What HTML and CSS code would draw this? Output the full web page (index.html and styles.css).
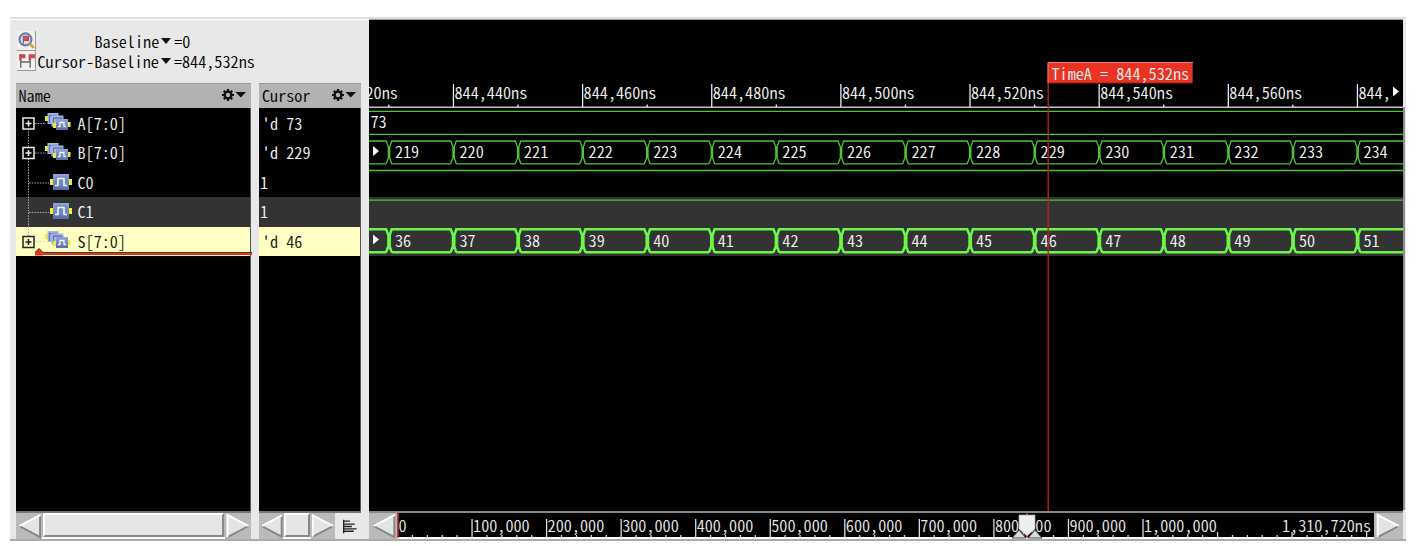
FILE: index.html
```
<!DOCTYPE html>
<html lang="en">
<head>
<meta charset="utf-8">
<title>Waveform</title>
<link rel="stylesheet" href="styles.css">
</head>
<body>
<svg class="defs" width="0" height="0" aria-hidden="true">
  <defs>
    <linearGradient id="blue" x1="0" y1="0" x2="0" y2="1"><stop offset="0" stop-color="#91a5d8"/><stop offset="1" stop-color="#566da8"/></linearGradient>
    <symbol id="gear" viewBox="0 0 24 14">
      <circle cx="7" cy="7" r="3.4" fill="none" stroke="#111" stroke-width="2.4"/>
      <path d="M7 1v2M7 11v2M1 7h2M11 7h2M2.8 2.8l1.4 1.4M9.8 9.8l1.4 1.4M11.2 2.8L9.8 4.200M4.200 9.800L2.800 11.200" stroke="#111" stroke-width="2.200"/>
      <path d="M14.500 4h10.500l-5.200 5.500z" fill="#111"/>
    </symbol>
    <symbol id="scalar" viewBox="0 0 26 20">
      <path d="M1 7h3v6H1zM20 7h3v6h-3z" fill="#f2ee2c"/>
      <rect x="4" y="2" width="16" height="16" fill="url(#blue)"/>
      <rect x="6.500" y="4.500" width="11" height="9" fill="#7489c0"/>
      <path d="M6 13.500h3v-7h6v7h3" fill="none" stroke="#f2f4ff" stroke-width="1.600"/>
    </symbol>
    <symbol id="bus" viewBox="0 0 26 20">
      <path d="M0 4h3v5H0zM3 7h3v5H3zM22.500 10h3v5h-3z" fill="#f2ee2c"/>
      <rect x="2.500" y="1" width="11" height="11" fill="#a9b9e2"/><path d="M4.500 11V3.500h8" fill="none" stroke="#5f77b4" stroke-width="1.400"/>
      <rect x="6.500" y="3.500" width="12" height="11" fill="#a9b9e2"/><path d="M8.500 13.500V6h9" fill="none" stroke="#5f77b4" stroke-width="1.400"/>
      <rect x="11" y="7" width="12" height="11" fill="url(#blue)"/>
      <path d="M13 14.500h2v-4h4v4h2" fill="none" stroke="#f2f4ff" stroke-width="1.300"/>
      <path d="M8 11h3v5H8z" fill="#f2ee2c"/>
    </symbol>
    <symbol id="left" viewBox="0 0 26 27">
      <path d="M24.500 2L3 13.500 24.500 25z" fill="#e4e4e4"/>
      <path d="M3 13.500L24.500 25V2" fill="none" stroke="#858585" stroke-width="2"/>
      <path d="M25 2L3 13.500" fill="none" stroke="#fff" stroke-width="2"/>
    </symbol>
    <symbol id="right" viewBox="0 0 26 27">
      <path d="M2 2L24 13.500 2 25z" fill="#e4e4e4"/>
      <path d="M24 13.500L2 25" fill="none" stroke="#858585" stroke-width="2"/>
      <path d="M2 25V2L24 13.500" fill="none" stroke="#fff" stroke-width="2"/>
    </symbol>
  </defs>
</svg>

<main class="window">
  <section class="side">
    <div class="info">
      <div class="info-line">
        <svg class="tool" viewBox="0 0 18 19"><rect width="18" height="19" fill="#f3f1ef"/><path d="M17.500 0v18.500H0" fill="none" stroke="#999"/><circle cx="8" cy="8" r="5.700" fill="#d7dfef" stroke="#6280ae" stroke-width="2"/><path d="M6 12V5h5v4H7" fill="#d05353" stroke="#bb4545"/><path d="M12 12l4 4" stroke="#d69b42" stroke-width="2.500"/></svg>
        <span class="baseline">Baseline</span><i class="caret"></i><span>=0</span>
      </div>
      <div class="info-line">
        <svg class="tool" viewBox="0 0 18 19"><rect width="18" height="19" fill="#f3f1ef"/><path d="M17.500 0v18.500H0" fill="none" stroke="#999"/><path d="M3.500 3v13M12.500 3v13M4 10.500h8" stroke="#666" stroke-width="1.300" fill="none"/><path d="M2 3h6v4H4v2H2zM11 3h6v4h-4v2h-2z" fill="#c94a4a"/></svg>
        <span>Cursor-Baseline</span><i class="caret"></i><span>=844,532ns</span>
      </div>
    </div>
    <div class="tables">
      <div class="pane names">
        <div class="head"><span>Name</span><svg class="gear"><use href="#gear"/></svg></div>
        <div class="rows">
          <div class="row"><svg class="icon"><use href="#bus"/></svg><span>A[7:0]</span></div>
          <div class="row"><svg class="icon"><use href="#bus"/></svg><span>B[7:0]</span></div>
          <div class="row"><svg class="icon scalar"><use href="#scalar"/></svg><span>C0</span></div>
          <div class="row alt"><svg class="icon scalar"><use href="#scalar"/></svg><span>C1</span></div>
          <div class="row selected"><svg class="icon"><use href="#bus"/></svg><span>S[7:0]</span></div>
          <svg class="tree" viewBox="0 0 236 150">
            <path d="M12.500 21v107M19 15.500h11M19 45h11M13 75h20M13 104.500h20" fill="none" stroke="#aaa" stroke-dasharray="1.500 1.200"/>
            <path d="M19 133.500h11" stroke="#d4d4b0" stroke-dasharray="1.500 1.200"/>
            <g fill="#000" stroke="#eee" stroke-width="1.500"><path d="M7 10h11v11H7zM7 39.500h11v11H7z"/><path d="M9.500 15.500h6M12.500 12.500v6M9.500 45h6M12.500 42v6"/></g>
            <g fill="#ffffc3" stroke="#222" stroke-width="1.500"><path d="M7 128.500h11v11H7z"/><path d="M9.500 134h6M12.500 131v6"/></g>
            <path d="M19 147.500v-3l4-4 4 4v.5h209v2H27v.5z" fill="#e63422"/><path d="M19 144.500l4-4 4 4h209" fill="none" stroke="#300" stroke-width=".8"/>
          </svg>
        </div>
        <div class="scroll"><svg class="arrow"><use href="#left"/></svg><i class="thumb"></i><svg class="arrow"><use href="#right"/></svg></div>
      </div>
      <div class="pane cursor">
        <div class="head"><span>Cursor</span><svg class="gear"><use href="#gear"/></svg></div>
        <div class="rows">
          <div class="row">'d 73</div><div class="row">'d 229</div><div class="row bit">1</div><div class="row bit alt">1</div><div class="row selected">'d 46</div>
        </div>
        <div class="scroll"><svg class="arrow"><use href="#left"/></svg><i class="thumb"></i><svg class="arrow"><use href="#right"/></svg>
          <svg class="align" viewBox="0 0 26 27"><path d="M8.500 7v14M8 8.500h7M8 11.500h12M8 14h9M8 16.500h14M8 19h11" stroke="#222" stroke-width="1.400" fill="none"/></svg></div>
      </div>
    </div>
  </section>
  <section class="wave">
    <svg class="plot" id="plot" viewBox="368.500 20 1034.500 491"></svg>
    <div class="overview">
      <svg class="arrow"><use href="#left"/></svg>
      <svg class="timeline" id="timeline" viewBox="397 513 977 26"></svg>
      <svg class="arrow"><use href="#right"/></svg>
    </div>
  </section>
  <div class="edge"></div>
</main>
<script src="wave.js"></script>
</body>
</html>
```
FILE: styles.css
```
* { box-sizing: border-box; }
body { margin: 0; width: 1428px; height: 546px; overflow: hidden; background: #fff; padding: 17px 0 0 10px; font: 350 16.2px/20px "Noto Sans CJK JP", monospace; font-feature-settings: "hwid"; color: #000; }
.defs { display: block; height: 0; }
.window { width: 1396px; height: 524px; background: #e8e8e8; border-top: 2px solid #dedede; border-bottom: 2px solid #ababab; display: flex; box-shadow: inset 0 1px #fff; }
.side { width: 358.5px; padding-left: 5.5px; display: flex; flex-direction: column; flex: none; }
.info { height: 64px; padding-top: 12px; }
.info-line { display: flex; height: 20px; align-items: center; padding-left: 1px; white-space: nowrap; }
.tool { width: 19px; height: 20px; margin-right: 2px; }
.baseline { margin-left: 57px; }
.caret { border: 5px solid transparent; border-top: 6px solid #111; border-bottom: 0; margin: 0 3px 0 2px; }
.tables { display: flex; gap: 8px; }
.pane { display: flex; flex-direction: column; }
.names { width: 235.5px; }
.cursor { width: 101.5px; }
.head { height: 25px; background: #b2b2b2; border-top: 1px solid #999; display: flex; align-items: center; justify-content: space-between; padding: 0 5px 2px 3px; }
.gear { width: 26px; height: 14px; margin-top: -1px; overflow: visible; }
.rows { height: 403px; background: #000; color: #f4f4f4; position: relative; padding-top: .5px; border-right: 1px solid #555; }
.row { height: 29.5px; display: flex; align-items: center; white-space: pre; padding-bottom: 1px; }
.row.alt { background: #333; }
.row.selected { background: #ffffc3; color: #111; }
.names .row { padding-left: 29px; }
.icon { width: 26px; height: 20px; margin: -1px 7px 0 0; }
.icon.scalar { margin: 0 3px 0 4px; }
.tree { position: absolute; left: 0; top: 0; width: 236px; height: 150px; }
.cursor .row { padding-left: 3px; }
.cursor .row.bit { padding-left: 1px; }
.scroll { height: 28px; display: flex; background: #b9b9b9; border-top: 2px solid #777; border-bottom: 2px solid #fff; }
.arrow { width: 26px; height: 26px; flex: none; background: #bababa; }
.thumb { flex: 1; margin: 0 1px; background: #e6e6e6; border: 2px solid #fff; border-right-color: #888; border-bottom-color: #888; }
.cursor .arrow { width: 24px; }
.align { width: 26px; height: 26px; background: #e8e8e8; }
.wave { width: 1034.5px; border-top: 1px solid #999; flex: none; display: flex; flex-direction: column; }
.plot { width: 1034.5px; height: 491px; background: #000; display: block; }
.overview { display: flex; height: 28px; background: #000; border-top: 2px solid #888; border-bottom: 2px solid #fff; }
.overview .arrow { width: 28.5px; }
.timeline { width: 977px; height: 26px; }
.edge { width: 2px; height: 403px; margin-top: 88px; background: #909090; }
svg text { fill: #f4f4f4; }
#timeline text { fill: #e8e8e8; }
```
FILE: wave.js
```
const FIRST = 388.4, STEP = 64.57, END = 1403, START = 368.5;
const put = (id, parts) => { document.getElementById(id).innerHTML = parts.join(''); };
const text = (x, y, s) => `<text x="${x}" y="${y}">${s}</text>`;
const line = (d, color, w = 1.3) => `<path d="${d}" fill="none" stroke="${color}" stroke-width="${w}"/>`;

// Bus outline: a hexagon per value, joined at each transition
function bus(top, bottom, color, w, slope) {
  let d = `M${START} ${top}H${FIRST - slope}`;
  let e = `M${START} ${bottom}H${FIRST - slope}`;
  for (let i = 0; i < 16; i++) {
    const x = FIRST + i * STEP, next = Math.min(x + STEP - slope, END);
    d += `L${x - .5} ${top + 6}V${bottom - 6}L${x - slope} ${bottom}M${x + slope} ${bottom}L${x + .8} ${bottom - 6}V${top + 6}L${x + slope} ${top}H${next}`;
    e += `M${x + slope} ${bottom}H${next}`;
  }
  return line(d + e, color, w);
}

const p = [];
p.push('<path d="M368 197H1403V256H368z" fill="#333"/>');
p.push(line('M368 107.300H1403', '#c4c4c4', 1.500));
p.push(line('M368 111.400H1403M368 134.300H1403M368 170.500H1403M368 200.200H1403', '#4fc436'));
p.push(bus(141, 163.800, '#4fc436', 1.300, 2.800));
p.push(bus(229.300, 252.300, '#6cf747', 2.500, 2.800));
p.push(text(365, 99, '20ns'));
for (let i = 0; i < 16; i++) {
  const x = FIRST + i * STEP;
  p.push(text(x + 6, 158, 219 + i), text(x + 6, 246.5, 36 + i));
  if (i % 2) {
    p.push(line(`M${x} 84V107`, '#eee'));
    p.push(text(x + 1, 99, i === 15 ? '844,' : `844,${440 + (i - 1) * 10}ns`));
  } else p.push(line(`M${x} 104.500V107`, '#eee'));
}
p.push(text(370, 128, '73'));
p.push('<path d="M372.500 146l6 5-6 5zM372.500 234.500l6 5-6 5zM1392.500 86.500l6 5-6 5z" fill="#fff"/>');
p.push(line('M1047.700 63V511', '#b4251b', 1.400));
p.push('<path d="M1047.500 62.500h145v20.500h-145z" fill="#eb3324"/><path d="M1047.500 83V62.500h145" fill="none" stroke="#ef8076"/><path d="M1192 63v20h-144" fill="none" stroke="#982018"/>');
p.push(text(1051, 79.5, 'TimeA = 844,532ns'));
put('plot', p);

const t = [];
const labels = ['0', '100,000', '200,000', '300,000', '400,000', '500,000', '600,000', '700,000', '800,000', '900,000', '1,000,000'];
labels.forEach((s, i) => {
  const x = 397.5 + i * 74.55;
  t.push(text(x + 1, 531.5, s));
  if (i) t.push(line(`M${x} 519V535`, '#ddd'));
});
for (let i = 1; i < 66; i++) {
  const x = 397.5 + i * 14.91;
  t.push(line(`M${x} ${i === 55 || i === 60 || i === 65 ? 532 : 535}V538`, '#ddd'));
}
t.push(text(1282, 531.5, '1,310,720ns'));
t.push(line('M397.800 511V538', '#eb3324', 1.500));
t.push(line('M1027 511V538', '#eb3324', 1.500));
t.push('<path d="M1019 515h16v14l-8 7-8-7z" fill="#eee" stroke="#aaa" stroke-width=".7"/><path d="M1012 538l7-8 7 8zM1028 538l7-8 7 8z" fill="#ddd" stroke="#444" stroke-width="1"/>');
put('timeline', t);
```
